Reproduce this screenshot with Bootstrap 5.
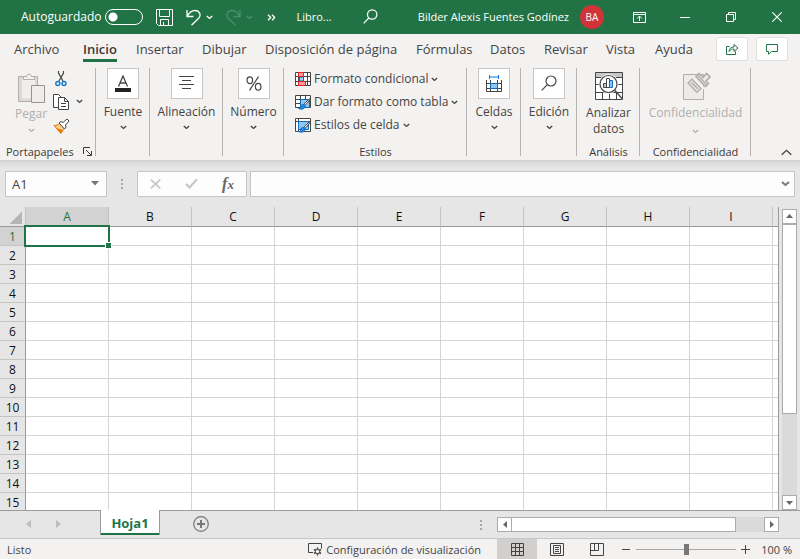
<!DOCTYPE html>
<html lang="es">
<head>
<meta charset="utf-8">
<meta name="viewport" content="width=device-width, initial-scale=1">
<title>Libro - Excel</title>
<link href="https://cdn.jsdelivr.net/npm/bootstrap@5.3.0/dist/css/bootstrap.min.css" rel="stylesheet">
<style>
  :root { --xl: #217346; --ink: #444; --off: #b1afad; --pane: #f3f2f1; --chrome: #e6e6e6; --edge: #c6c6c6; }
  body { font-family: "Open Sans", "Noto Sans", sans-serif; font-size: 12px; line-height: 16px; color: var(--ink); background: var(--chrome); }
  svg { display: block; flex: none; fill: none; stroke: currentColor; }
  button { font: inherit; color: inherit; background: none; border: 0; padding: 0; }
  .titlebar { background: var(--xl); height: 34px; padding-left: 21px; }
  .autosave { gap: 4px; margin-right: 13px; }
  .autosave input { appearance: none; width: 38px; height: 16px; border: 1px solid #fff; border-radius: 8px; margin: 0;
    background: radial-gradient(circle at 7px 7px, #fff 4px, transparent 5px); }
  .split { gap: 5px; margin-left: 13px; }
  .faded { color: #4d9069; }
  .more { margin-left: 14px; }
  .doc { margin-left: 20px; width: 67px; font-size: 11px; }
  .user { font-size: 11px; }
  .avatar { width: 24px; height: 24px; background: #d13438; font-size: 10px; margin: 0 12px 0 11px; }
  .winbtn { width: 46px; height: 34px; }
  .tabs { background: var(--pane); height: 32px; padding-left: 14px; font-size: 13px; }
  .tabs nav { display: grid; grid-template-columns: 69px 53px 66px 63px 151px 74px 54px 62px 49px 50px; justify-items: start; }
  .tabs nav a { color: var(--ink); text-decoration: none; height: 28px; line-height: 30px; border-bottom: 3px solid transparent; }
  .tabs nav a.current { font-weight: 600; border-color: var(--xl); color: #3b3a39; }
  .share { padding: 3px 12px 0 0; }
  .sharebtn { width: 32px; height: 24px; background: #fff; border: 1px solid #e1dfdd; border-radius: 2px; color: var(--xl); }
  .ribbon { background: var(--pane); padding-top: 2px; display: grid;
    grid-template-columns: 96px 54px 73px 61px 183px 54px 56px 63px 111px 1fr; }
  .group { height: 92px; background: linear-gradient(#b5b3b1, #b5b3b1) right top / 1px 88px no-repeat; }
  .bigbtn { gap: 5px; white-space: nowrap; }
  .bigbtn .tile { width: 32px; height: 31px; background: #fff; border: 1px solid #c8c6c4; }
  .tall { padding-top: 4px; gap: 4px; white-space: nowrap; }
  .disabled-cmd { color: var(--off); }
  .caption-row { height: 16px; color: #3b3a39; font-size: 11px; }
  .clipcaption { padding: 0 4px 0 6px; }
  .styles { padding-left: 11px; }
  .styles button { height: 23px; gap: 3px; }
  .clip { gap: 6px; padding: 3px 12px 0 15px; }
  .paste { padding-top: 2px; gap: 2px; }
  .mini { gap: 7px; }
  .formula { height: 47px; padding: 11px 5px 10px; background: linear-gradient(#cfcfcf, #dedede 3px, var(--chrome) 8px); }
  .field { height: 26px; background: #fdfdfd; border: 1px solid var(--edge); font-size: 13px; color: var(--ink); }
  .namebox { width: 102px; padding: 0 7px 0 6px; }
  .namebox input { width: 70px; border: 0; padding: 0; background: none; color: inherit; outline: 0; }
  .namebox svg, .inputbox svg { color: #777; }
  .grip { width: 30px; color: #a6a6a6; }
  .fxbox { width: 110px; margin-right: 3px; color: #c8c8c8; }
  .fx { color: #666; font: italic bold 16px "Liberation Serif", serif; }
  .fx small { font-size: 13px; }
  .inputbox input { border: 0; background: none; outline: 0; padding: 0 6px; min-width: 0; }
  .sheetarea { min-height: 0; }
  .gridpane { overflow: hidden; min-width: 0; border-right: 1px solid #9b9b9b; }
  .cells { table-layout: fixed; width: 100%; border-collapse: separate; border-spacing: 0; background: #fff; font-size: 12px; color: #111; }
  .cells th, .cells td { padding: 0; height: 19px; line-height: 16px; border: 0 solid #d4d4d4; border-width: 0 1px 1px 0; }
  .cells th { font-weight: 400; text-align: center; background: var(--chrome); border-color: #c4c4c4; padding-top: 2px; }
  .cells thead th { height: 20px; line-height: 18px; padding-top: 1px; border-bottom-color: #9b9b9b; }
  .cells tbody th { border-right-color: #9b9b9b; }
  .cells tr > :last-child { border-right-width: 0; }
  .cells th.on { background: #d2d2d2; color: var(--xl); }
  .cells thead th.corner { background: linear-gradient(135deg, transparent 50%, #b5b5b5 50%) 10px 5px / 12px 12px no-repeat var(--chrome); }
  .rowhead { width: 26px; } .colw { width: 83px; }
  .cells td.active { position: relative; z-index: 1; }
  .cells td.active::before { content: ""; position: absolute; inset: -2px; border: 2px solid var(--xl); }
  .cells td.active::after { content: ""; position: absolute; right: -4px; bottom: -4px; width: 7px; height: 7px; background: var(--xl); border: 1px solid #fff; }
  .vscroll { width: 15px; margin: 2px 3px 0; background: #dadada; }
  .sbtn { width: 15px; height: 15px; background: #fff; border: 1px solid #ababab; color: #666; flex: none; }
  .sbtn svg, .tri { fill: currentColor; stroke: none; }
  .vthumb { height: 190px; background: #fff; border: 1px solid #ababab; }
  .sheets { height: 29px; border-top: 1px solid #9b9b9b; border-bottom: 1px solid var(--edge); padding-right: 21px; }
  .sheetnav { width: 100px; padding: 0 39px 0 26px; height: 26px; color: #bdbdbd; }
  .sheettab { width: 60px; height: 25px; margin-top: -1px; background: #fff; border: 1px solid #9b9b9b; border-width: 0 1px; box-shadow: inset 0 -2px var(--xl); color: var(--xl); font-weight: 700; font-size: 13px; }
  .addsheet { margin-left: 33px; color: #777; height: 26px; }
  .hscroll { width: 282px; height: 15px; margin: 6px 0 0 15px; background: #dadada; }
  .hthumb { width: 225px; background: #fff; border: 1px solid #ababab; margin-left: -1px; }
  .statusbar { background: var(--pane); height: 20px; padding: 0 8px 0 7px; font-size: 11px; }
  .statustext { padding-top: 1px; }
  .viewbtn { width: 40px; height: 20px; }
  .viewbtn.on { background: #d2d0ce; }
  .zoomer { width: 100px; height: 20px; margin: 0 5px; appearance: none; background: linear-gradient(#a9a7a5, #a9a7a5) center / 100% 1px no-repeat; }
  .zoomer::-webkit-slider-thumb { appearance: none; width: 5px; height: 11px; background: #777; border: 0; }
  .pct { width: 42px; text-align: right; }
</style>
<script src="https://cdn.jsdelivr.net/npm/bootstrap@5.3.0/dist/js/bootstrap.bundle.min.js"></script>
</head>
<body class="d-flex flex-column vh-100 overflow-hidden">
<svg width="0" height="0" class="position-absolute" aria-hidden="true">
  <symbol id="chev" viewBox="0 0 7 5"><path d="M.8 1l2.700 2.400L6.200 1" stroke-width="1.400"/></symbol>
  <symbol id="pen" viewBox="0 0 16 15">
    <path d="M15.500 3l-5.200 4.500-1 1.300 1.200 1 1.200-1 3.800-4.800z" fill="#eee" stroke="#444"/>
    <path d="M9 9.500c-2-.5-3 .7-3.200 2-.2 1.500-1 2-2.300 2 2.500 1.300 6.200.8 6.800-2.500z" fill="#2b88d8" stroke="#0f6cbd"/>
  </symbol>
</svg>

<header class="titlebar d-flex align-items-center text-white">
  <label class="autosave d-flex align-items-center" for="auto">Autoguardado <input id="auto" type="checkbox" role="switch"></label>
  <button aria-label="Guardar"><svg width="17" height="17"><path d="M.5.5h16v16h-14l-2-2zM3.500.5v7h10v-7M4.500 16.500v-6h8v6M7.500 13v3.500"/></svg></button>
  <div class="split d-flex align-items-center">
    <button aria-label="Deshacer"><svg width="15" height="17" stroke-width="1.300"><path d="M1 1v6.500h6.500M1.200 7.200C3.500 3 6 1.500 9 1.500c4.500 0 6.500 4.500 3.700 7.700L5.500 16.300"/></svg></button>
    <button aria-label="Opciones de deshacer"><svg width="7" height="5"><use href="#chev"/></svg></button>
  </div>
  <div class="split faded d-flex align-items-center">
    <button aria-label="Rehacer"><svg width="15" height="17" stroke-width="1.300"><path d="M14 1v6.500H7.500M13.800 7.200C11.500 3 9 1.500 6 1.500c-4.500 0-6.500 4.500-3.700 7.700l7.200 7.100"/></svg></button>
    <button aria-label="Opciones de rehacer"><svg width="7" height="5"><use href="#chev"/></svg></button>
  </div>
  <button class="more" aria-label="Más comandos"><svg width="9" height="7" stroke-width="1.300"><path d="M1 .8l2.700 2.700L1 6.200M5 .8l2.700 2.700L5 6.200"/></svg></button>
  <span class="doc">Libro...</span>
  <button aria-label="Buscar"><svg width="15" height="16" stroke-width="1.200"><circle cx="9.200" cy="5.500" r="4.700"/><path d="M5.800 9L.7 14.300"/></svg></button>
  <span class="user ms-auto text-nowrap">Bilder Alexis Fuentes Godínez</span>
  <span class="avatar rounded-circle d-flex align-items-center justify-content-center">BA</span>
  <button class="winbtn d-flex align-items-center justify-content-center" aria-label="Opciones de la cinta"><svg width="13" height="11"><path d="M.5.5h12v10H.5zM.5 2.500h12M6.500 9V4.500M4 6.500l2.500-2.500L9 6.500"/></svg></button>
  <button class="winbtn d-flex align-items-center justify-content-center" aria-label="Minimizar"><svg width="10" height="1"><path d="M0 .5h10"/></svg></button>
  <button class="winbtn d-flex align-items-center justify-content-center" aria-label="Restaurar"><svg width="10" height="10"><path d="M.5 2.500h7v7h-7zM2.500 2.500v-2h7v7h-2"/></svg></button>
  <button class="winbtn d-flex align-items-center justify-content-center" aria-label="Cerrar"><svg width="10" height="10" stroke-width="1.100"><path d="M.3.3l9.400 9.400M9.700.3L.3 9.700"/></svg></button>
</header>

<div class="tabs d-flex align-items-start">
  <nav class="text-nowrap">
    <a href="#">Archivo</a><a href="#" class="current">Inicio</a><a href="#">Insertar</a><a href="#">Dibujar</a><a href="#">Disposición de página</a><a href="#">Fórmulas</a><a href="#">Datos</a><a href="#">Revisar</a><a href="#">Vista</a><a href="#">Ayuda</a>
  </nav>
  <div class="share ms-auto d-flex gap-2">
    <button class="sharebtn d-flex align-items-center justify-content-center" aria-label="Compartir"><svg width="13" height="12"><path d="M3.500 3.500h-3v8h9v-3M3 8.500c.5-3 2-4.500 5-4.500V1.500l4 3.500-4 3.500V6C6 6 4.500 6.500 3 8.500z"/></svg></button>
    <button class="sharebtn d-flex align-items-center justify-content-center" aria-label="Comentarios"><svg width="12" height="11"><path d="M.5.5h11v7h-6l-3 2.700V7.500h-2z"/></svg></button>
  </div>
</div>

<section class="ribbon" aria-label="Inicio">
  <div class="group d-flex flex-column">
    <div class="clip d-flex">
      <button class="paste disabled-cmd d-flex flex-column align-items-center" disabled>
        <svg width="28" height="31"><path d="M1.500 3.500h19v25h-19z" fill="#dcdad8"/><path d="M5 6.500h13v19H5z" fill="#f0efed" stroke="none"/><path d="M6.500 6.500v-3h3c0-3 5-3 5 0h3v3z" fill="#f3f2f1"/><path d="M14.500 12.500h13v17h-13z" fill="#efedeb" stroke="#979593"/></svg>
        <span>Pegar</span><svg class="mt-1" width="7" height="5"><use href="#chev"/></svg>
      </button>
      <div class="d-flex flex-column mini">
        <button aria-label="Cortar"><svg width="16" height="16"><path d="M5.500 0v2l4.500 8M10.500 0v2L6 10" stroke-width="1.200"/><circle cx="4.800" cy="12.500" r="2" stroke="#0f78d4" stroke-width="1.400"/><circle cx="11" cy="12.500" r="2" stroke="#0f78d4" stroke-width="1.400"/></svg></button>
        <button aria-label="Copiar"><svg width="17" height="17"><path d="M5 13.500H.5V.5h5l3 3" fill="#fff"/><path d="M5.500 3.500h6l4 4v8h-10zM11.500 3.500v4h4M8 9.500h5M8 12.500h5" fill="#fff"/></svg></button>
        <button aria-label="Copiar formato"><svg width="17" height="16"><path d="M1 7.500c2.500 0 4-.5 5.500-2l5 5c-1.500 1.500-2.500 3-3.500 5z" fill="#fbd28d" stroke="#e97600"/><path d="M2 9c3 2 5 2 8 3l-2.500 3z" fill="#e97600" stroke="none"/><path d="M6 5l2-1.500 2 1 4-3.500 2 2-3.500 4 .5 2-1.500 2z" fill="#fff"/></svg></button>
      </div>
      <button class="align-self-start mt-4" aria-label="Opciones de copiar"><svg class="mt-1" width="7" height="5"><use href="#chev"/></svg></button>
    </div>
    <div class="caption-row clipcaption mt-auto d-flex align-items-center justify-content-between text-nowrap"><span>Portapapeles</span><svg width="9" height="9"><path d="M.5 7V.5H7M3 3l5 5M8.500 4v4.500H4"/></svg></div>
  </div>
  <div class="group">
    <button class="bigbtn w-100 d-flex flex-column align-items-center"><span class="tile d-flex align-items-center justify-content-center"><svg width="16" height="17"><path d="M3.500 11.500L8 1l4.500 10.500M5 8h6" stroke-width="1.300"/><path d="M0 15h16" stroke="#222" stroke-width="4"/></svg></span><span>Fuente</span><svg width="7" height="5"><use href="#chev"/></svg></button>
  </div>
  <div class="group">
    <button class="bigbtn w-100 d-flex flex-column align-items-center"><span class="tile d-flex align-items-center justify-content-center"><svg width="15" height="14"><path d="M0 .5h15M3 4.500h9M0 8.500h15M3 12.500h9"/></svg></span><span>Alineación</span><svg width="7" height="5"><use href="#chev"/></svg></button>
  </div>
  <div class="group">
    <button class="bigbtn w-100 d-flex flex-column align-items-center"><span class="tile d-flex align-items-center justify-content-center"><svg width="16" height="15" stroke-width="1.200"><ellipse cx="3.800" cy="4.200" rx="2.800" ry="3.400"/><ellipse cx="12.200" cy="10.800" rx="2.800" ry="3.400"/><path d="M12.500.7L3.500 14.300"/></svg></span><span>Número</span><svg width="7" height="5"><use href="#chev"/></svg></button>
  </div>
  <div class="group d-flex flex-column">
    <div class="styles">
      <button class="d-flex align-items-center text-nowrap"><svg width="16" height="14"><path d="M.5.5h15v13H.5zM.5 4.500h15M.5 9.500h15M3.500.5v13M12.500.5v13" fill="#fff"/><path d="M4.500 5h4v4h-4z" fill="#9fcdf3" stroke="#0f6cbd"/><path d="M3.500.5h5v4h-5zM3.500 9.500h7v4h-7z" fill="#ff9a9a" stroke="#e02020"/></svg>Formato condicional<svg width="7" height="5"><use href="#chev"/></svg></button>
      <button class="d-flex align-items-center text-nowrap"><svg width="16" height="15"><path d="M.5.5h15v12H.5zM.5 4.500h15M.5 8.500h15M5.500.5v12M10.500.5v12" fill="#fff"/><path d="M5.500 4.500h9v8h-9z" fill="#91c5f2" stroke="#0f6cbd"/><use href="#pen" width="16" height="15"/></svg>Dar formato como tabla<svg width="7" height="5"><use href="#chev"/></svg></button>
      <button class="d-flex align-items-center text-nowrap"><svg width="16" height="15"><path d="M.5.5h15v13H.5zM.5 3.500h15M3.500.5v13" fill="#fff"/><path d="M3.500 3.500h10v8h-10z" fill="#91c5f2" stroke="#0f6cbd"/><use href="#pen" width="16" height="15"/></svg>Estilos de celda<svg width="7" height="5"><use href="#chev"/></svg></button>
    </div>
    <div class="caption-row mt-auto text-center">Estilos</div>
  </div>
  <div class="group">
    <button class="bigbtn w-100 d-flex flex-column align-items-center"><span class="tile d-flex align-items-center justify-content-center"><svg width="16" height="17"><path d="M.5 5v11.500h15V5M.5 8.500h15M.5 13.500h15M4.500 5v11.500M11.500 5v11.500"/><path d="M4.500 8.500h7v5h-7z" fill="#91c5f2" stroke="#0f6cbd"/><path d="M3.500 0v4M12.500 0v4M3.500 2h9" stroke="#0f78d4"/></svg></span><span>Celdas</span><svg width="7" height="5"><use href="#chev"/></svg></button>
  </div>
  <div class="group">
    <button class="bigbtn w-100 d-flex flex-column align-items-center"><span class="tile d-flex align-items-center justify-content-center"><svg width="16" height="16" stroke-width="1.200"><circle cx="10" cy="6" r="5"/><path d="M6.400 9.600L.7 15.300"/></svg></span><span>Edición</span><svg width="7" height="5"><use href="#chev"/></svg></button>
  </div>
  <div class="group d-flex flex-column">
    <button class="tall w-100 d-flex flex-column align-items-center"><svg width="28" height="29"><path d="M.5.5h27v27H.5z" fill="#fff"/><path d="M1 1h26v4H1z" fill="#c8c6c4" stroke="none"/><path d="M.5 5.500h27M.5 12.500h27M.5 20.500h27M7.500 20v7.500M14.500 20v7.500M21.500 20v7.500"/><circle cx="13.500" cy="12" r="9.500" fill="#fff" stroke="#f3f2f1"/><circle cx="13.500" cy="12" r="8.500" fill="#fff" stroke-width="1.200"/><path d="M19.500 18l7.500 8.500" stroke-width="1.300"/><path d="M8.500 11.500h3v4h-3z" fill="#c8c6c4"/><path d="M11.500 6.500h3v9h-3z"/><path d="M14.500 8.500h3v7h-3z" fill="#91c5f2" stroke="#0f6cbd"/></svg><span>Analizar<br>datos</span></button>
    <div class="caption-row mt-auto text-center">Análisis</div>
  </div>
  <div class="group d-flex flex-column">
    <button class="tall disabled-cmd w-100 pt-0 d-flex flex-column align-items-center" disabled><svg class="mt-1" width="30" height="29" viewBox="0 2 30 29"><path d="M2.500 4.500h20v25h-20z" fill="#ecebe9"/><path d="M7.500 12.500l4-4 9.500 9.500-4 4z" fill="#e4e2e0" stroke="#f3f2f1" stroke-width="4"/><path d="M7 13l4-4 9 9.500-4 4zM10.500 12.500l6.500 6.500" fill="#e4e2e0" stroke-width="1.400"/><path d="M15 6.500L18 3.500l4 4 3.500-4 3.500 3.500-4 4 2.500 2.500-3 3z" fill="#ecebe9" stroke-width="1.600"/><path d="M16.500 5l9.500 10" stroke-width="1.300"/></svg><span>Confidencialidad</span><svg class="mt-1" width="7" height="5"><use href="#chev"/></svg></button>
    <div class="caption-row mt-auto text-center">Confidencialidad</div>
  </div>
  <button class="align-self-end ms-auto me-2 mb-1" aria-label="Contraer la cinta"><svg width="11" height="7" stroke-width="1.300"><path d="M.7 5.800l4.800-4.500 4.800 4.500"/></svg></button>
</section>

<div class="formula d-flex">
  <div class="field namebox d-flex align-items-center justify-content-between"><input aria-label="Cuadro de nombres" value="A1"><svg class="tri" width="8" height="5"><path d="M0 0h8L4 4.500z"/></svg></div>
  <div class="grip d-flex align-items-center justify-content-center"><svg width="2" height="12"><path d="M1 1v10" stroke-width="2" stroke-dasharray="2 2"/></svg></div>
  <div class="field fxbox d-flex align-items-center justify-content-around">
    <button aria-label="Cancelar"><svg width="11" height="10" stroke-width="1.800"><path d="M.8.6l9.400 8.800M10.200.6L.8 9.400"/></svg></button>
    <button aria-label="Introducir"><svg width="13" height="11" stroke-width="2.200"><path d="M1 6l3.500 3.500L12 1.300"/></svg></button>
    <button class="fx" aria-label="Insertar función">f<small>x</small></button>
  </div>
  <div class="field inputbox flex-fill d-flex align-items-center"><input class="flex-fill" aria-label="Barra de fórmulas"><svg class="me-1" width="9" height="6" stroke-width="2"><path d="M1 1l3.500 3L8 1"/></svg></div>
</div>

<main class="sheetarea d-flex flex-fill">
  <div class="gridpane flex-fill">
    <table class="cells">
      <colgroup><col class="rowhead"><col class="colw" span="9"><col></colgroup>
      <thead><tr><th class="corner"></th><th class="on">A</th><th>B</th><th>C</th><th>D</th><th>E</th><th>F</th><th>G</th><th>H</th><th>I</th><th></th></tr></thead>
      <tbody>
        <tr><th class="on">1</th><td class="active"></td><td></td><td></td><td></td><td></td><td></td><td></td><td></td><td></td><td></td></tr>
        <tr><th>2</th><td></td><td></td><td></td><td></td><td></td><td></td><td></td><td></td><td></td><td></td></tr>
        <tr><th>3</th><td></td><td></td><td></td><td></td><td></td><td></td><td></td><td></td><td></td><td></td></tr>
        <tr><th>4</th><td></td><td></td><td></td><td></td><td></td><td></td><td></td><td></td><td></td><td></td></tr>
        <tr><th>5</th><td></td><td></td><td></td><td></td><td></td><td></td><td></td><td></td><td></td><td></td></tr>
        <tr><th>6</th><td></td><td></td><td></td><td></td><td></td><td></td><td></td><td></td><td></td><td></td></tr>
        <tr><th>7</th><td></td><td></td><td></td><td></td><td></td><td></td><td></td><td></td><td></td><td></td></tr>
        <tr><th>8</th><td></td><td></td><td></td><td></td><td></td><td></td><td></td><td></td><td></td><td></td></tr>
        <tr><th>9</th><td></td><td></td><td></td><td></td><td></td><td></td><td></td><td></td><td></td><td></td></tr>
        <tr><th>10</th><td></td><td></td><td></td><td></td><td></td><td></td><td></td><td></td><td></td><td></td></tr>
        <tr><th>11</th><td></td><td></td><td></td><td></td><td></td><td></td><td></td><td></td><td></td><td></td></tr>
        <tr><th>12</th><td></td><td></td><td></td><td></td><td></td><td></td><td></td><td></td><td></td><td></td></tr>
        <tr><th>13</th><td></td><td></td><td></td><td></td><td></td><td></td><td></td><td></td><td></td><td></td></tr>
        <tr><th>14</th><td></td><td></td><td></td><td></td><td></td><td></td><td></td><td></td><td></td><td></td></tr>
        <tr><th>15</th><td></td><td></td><td></td><td></td><td></td><td></td><td></td><td></td><td></td><td></td></tr>
      </tbody>
    </table>
  </div>
  <div class="vscroll d-flex flex-column">
    <button class="sbtn d-flex align-items-center justify-content-center" aria-label="Subir"><svg width="7" height="4"><path d="M0 4h7L3.500 0z"/></svg></button>
    <div class="vthumb"></div>
    <button class="sbtn mt-auto d-flex align-items-center justify-content-center" aria-label="Bajar"><svg width="7" height="4"><path d="M0 0h7L3.500 4z"/></svg></button>
  </div>
</main>

<div class="sheets d-flex">
  <div class="sheetnav d-flex align-items-center justify-content-between">
    <button aria-label="Hoja anterior"><svg class="tri" width="5" height="8"><path d="M5 0v8L0 4z"/></svg></button>
    <button aria-label="Hoja siguiente"><svg class="tri" width="5" height="8"><path d="M0 0v8l5-4z"/></svg></button>
  </div>
  <button class="sheettab">Hoja1</button>
  <button class="addsheet" aria-label="Hoja nueva"><svg width="16" height="16"><circle cx="8" cy="8" r="7.300" stroke-width="1.200"/><path d="M8 4v8M4 8h8" stroke-width="2"/></svg></button>
  <div class="ms-auto d-flex align-items-center"><svg width="2" height="12" color="#a6a6a6"><path d="M1 1v10" stroke-width="2" stroke-dasharray="2 2"/></svg></div>
  <div class="hscroll d-flex">
    <button class="sbtn d-flex align-items-center justify-content-center" aria-label="Izquierda"><svg width="4" height="7"><path d="M4 0v7L0 3.500z"/></svg></button>
    <div class="hthumb"></div>
    <button class="sbtn ms-auto d-flex align-items-center justify-content-center" aria-label="Derecha"><svg width="4" height="7"><path d="M0 0v7l4-3.500z"/></svg></button>
  </div>
</div>

<footer class="statusbar d-flex align-items-center text-nowrap">
  <span class="statustext">Listo</span>
  <button class="statustext ms-auto me-3 d-flex align-items-center gap-1"><svg width="14" height="13"><path d="M4.500 9.500h-4v-9h13v5M2 9.500h3"/><circle cx="9.500" cy="8.500" r="2.200"/><path d="M9.500 4.500v2M9.500 10.500v2M6 6.500l1.800 1M11.200 9.500l1.800 1M6 10.500l1.800-1M11.200 7.500l1.800-1" stroke-width="1.500"/></svg>Configuración de visualización</button>
  <button class="viewbtn on d-flex align-items-center justify-content-center" aria-label="Normal"><svg width="13" height="13"><path d="M.5.5h12v12H.5zM.5 4.500h12M.5 8.500h12M4.500.5v12M8.500.5v12"/></svg></button>
  <button class="viewbtn d-flex align-items-center justify-content-center" aria-label="Diseño de página"><svg width="14" height="13"><path d="M.5.5h13v12H.5zM3.500 2.500h7v8h-7zM5 4.500h4M5 6.500h4M5 8.500h4"/></svg></button>
  <button class="viewbtn d-flex align-items-center justify-content-center" aria-label="Vista previa de salto de página"><svg width="14" height="13"><path d="M.5.5h13v12H.5zM.5 7.500h8v-7M4.500.5v7"/></svg></button>
  <button class="ms-1" aria-label="Alejar"><svg width="10" height="9"><path d="M1 4.500h8"/></svg></button>
  <input class="zoomer" type="range" min="0" max="100" value="50" aria-label="Zoom">
  <button aria-label="Acercar"><svg width="9" height="9"><path d="M0 4.500h9M4.500 0v9"/></svg></button>
  <span class="pct statustext">100 %</span>
</footer>
</body>
</html>
